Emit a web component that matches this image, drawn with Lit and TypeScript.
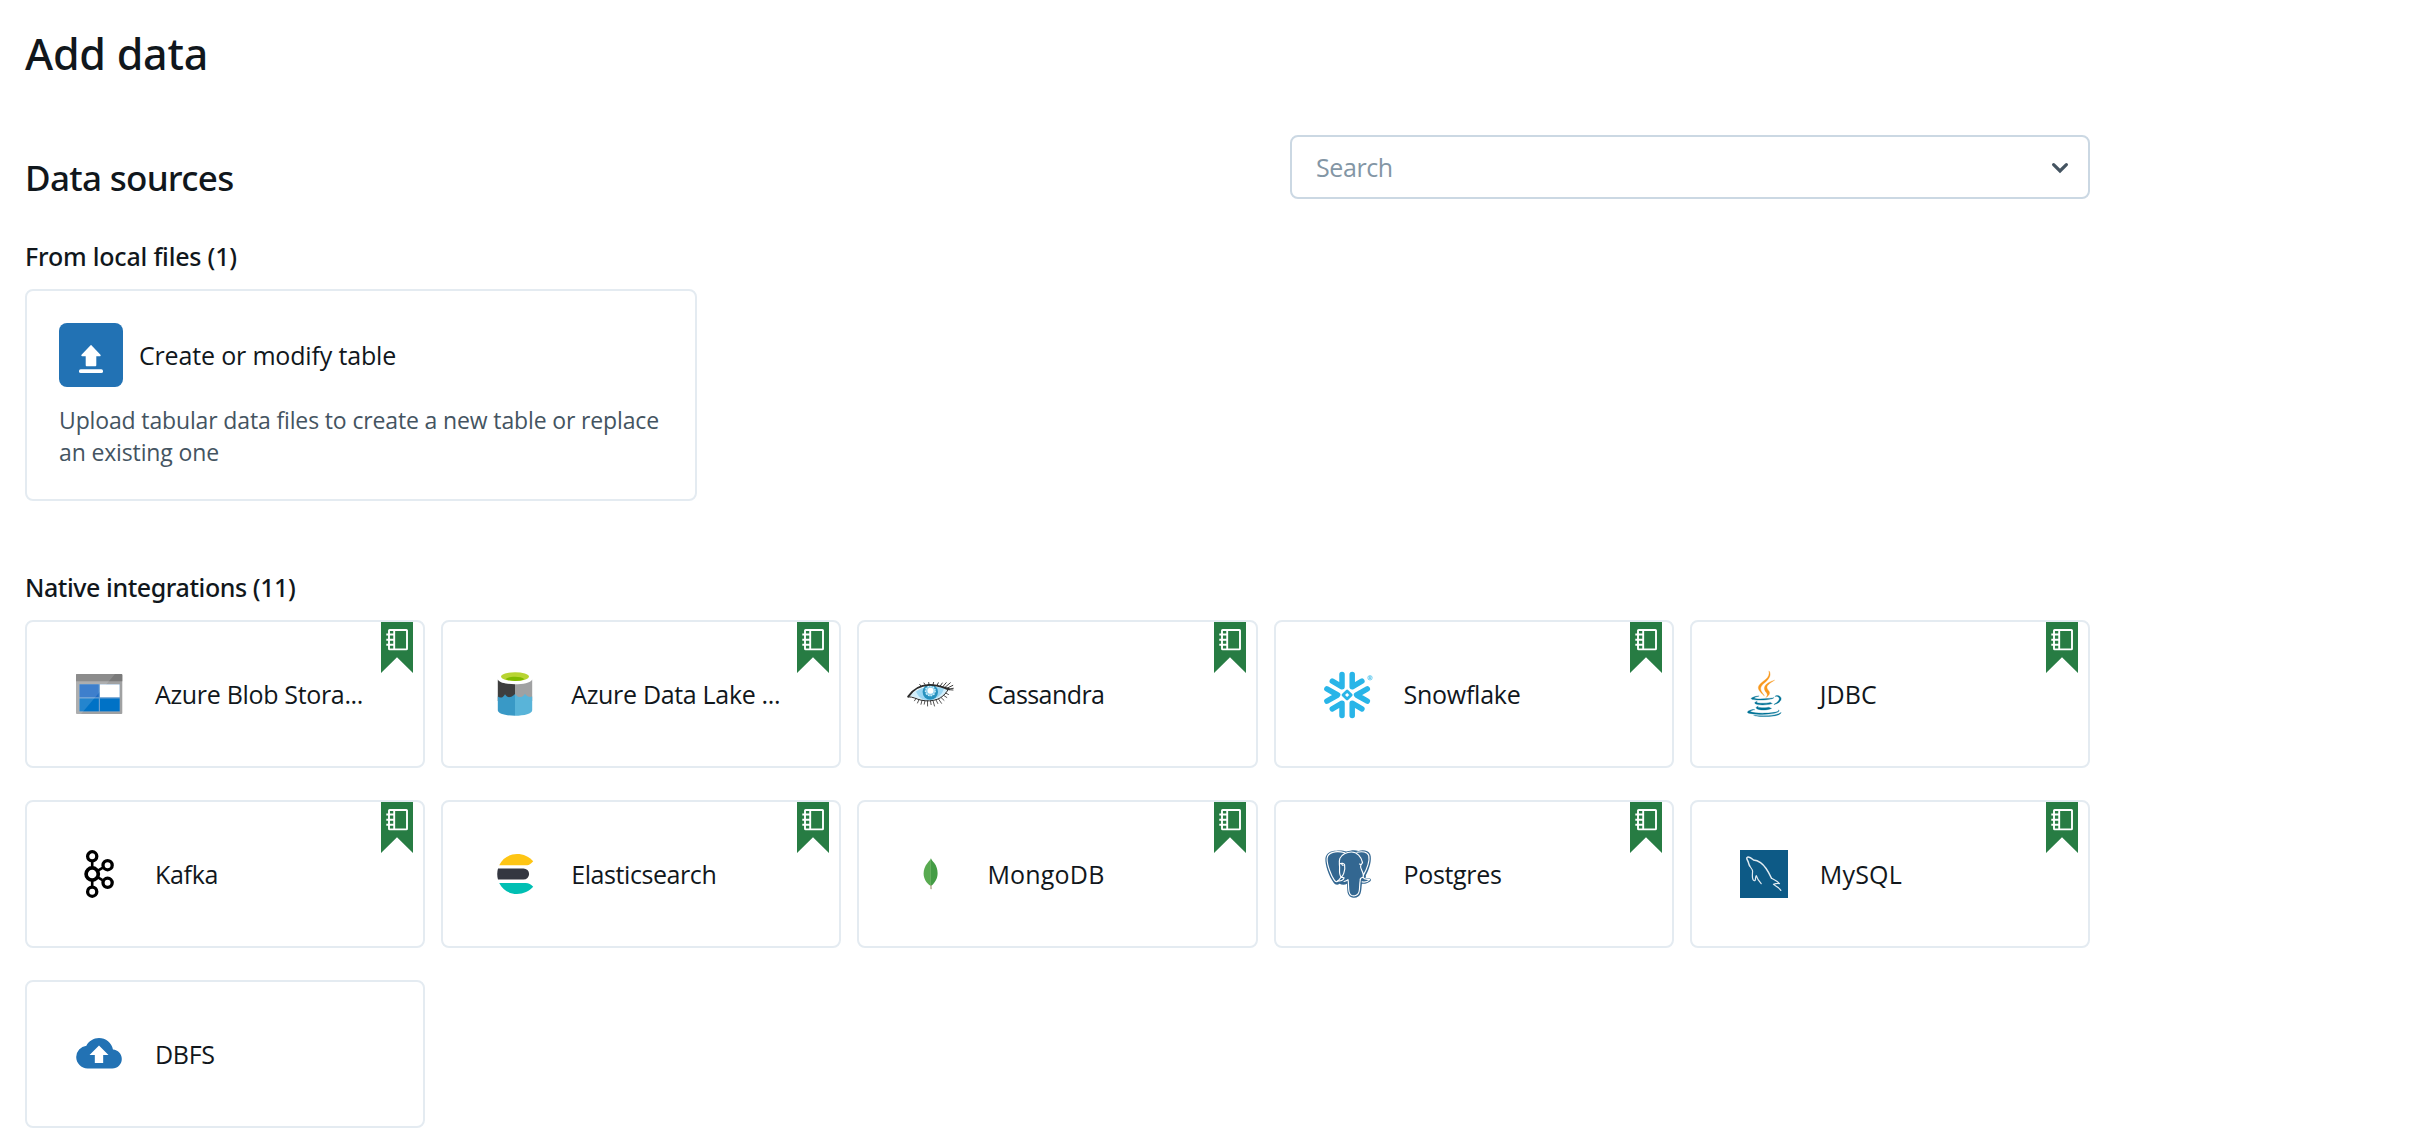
import { LitElement, html, css, svg } from "lit";
import type { TemplateResult, SVGTemplateResult } from "lit";
import { styleMap } from "lit/directives/style-map.js";

interface Source {
  name: string;
  icon: SVGTemplateResult;
  /** Letter spacing of the label, in pixels. */
  tracking: number;
  notebook: boolean;
}

const azureBlob = svg`
  <rect x="1" y="4" width="46.3" height="40" rx="1" fill="#a0a1a2"/>
  <path d="M2 4h44.3a1 1 0 0 1 1 1v6.2H1V5a1 1 0 0 1 1-1z" fill="#7a7a7a"/>
  <path d="M4.4 14.2h40.4v27.2H4.4z" fill="#6a9fd0"/>
  <path d="M4.6 14.4h19.2v12.8H4.6z" fill="#1f6bc4"/>
  <path d="M25 14.4h19.6v12.8H25z" fill="#fff"/>
  <path d="M4.6 28.4h19.2v12.8H4.6zM25 28.4h19.6v12.8H25z" fill="#0072c6"/>
  <path d="M1 5a1 1 0 0 1 1-1h38L6 44H2a1 1 0 0 1-1-1z" fill="#fff" opacity=".14"/>`;

const azureLake = svg`
  <path d="M6.8 9.5C8.5 13 16 14.2 24 14.2V31H6.8z" fill="#3e3e3e"/>
  <path d="M41.2 9.5C39.5 13 32 14.2 24 14.2V31h17.2z" fill="#a0a1a2"/>
  <path d="M6.8 26.5c2 1.5 4.5 1.5 6.2-.8l1-1.500c1.500 2.300 3 3.200 5 2.900 2-.3 3-1.500 5-3.200V45.700C14.500 45.700 6.800 43.500 6.800 40.200z" fill="#3999c6"/>
  <path d="M24 23.900c1.500 2 3 3.200 5 3.200s3.600-1.300 5-3.400c1.500 2.300 4 4 7.200 2.800v13.700c0 3.300-7.700 5.500-17.200 5.500z" fill="#59b4d9"/>
  <ellipse cx="24" cy="7.6" rx="17" ry="5.800" fill="#fff"/>
  <ellipse cx="24" cy="6.600" rx="14" ry="4.300" fill="#b8d432"/>
  <path d="M14.600 9.200C16.500 7.600 20 6.800 24 6.800s7.500.8 9.400 2.400C31.300 10.200 28 10.900 24 10.900s-7.300-.7-9.400-1.700z" fill="#7fba00"/>`;

const cassandra = svg`
  <path d="M3 26c5-5.500 10-8.800 19-9.200 8-.3 13 1 18.500 2.400C37.500 26 30 30.400 21 30.600 14 30.700 10 27.500 3 26z" fill="#d3effb"/>
  <path d="M9 21.500c3.500-2.500 7-4.200 13-4.600 7-.3 11 .6 15 1.700C35 26 28 30 21 30.200c-6-.3-10-3.500-12-8.700z" fill="#9bd6f2"/>
  <circle cx="23.300" cy="22" r="7.700" fill="#2792bf"/>
  <circle cx="23.300" cy="21" r="4.900" fill="#8fd0ec" stroke="#d9f2fc" stroke-width="1.200" stroke-dasharray="1.500 1.300"/>
  <circle cx="23.500" cy="20.800" r="3" fill="#fff"/>
  <g fill="none" stroke="#2b2b2b" stroke-linecap="round">
    <path d="M1.200 26.600C6 19.500 13 15.300 22 14.900c8-.2 13.500 2.300 20 4.300" stroke-width="1.900"/>
    <path d="M1.200 26.800c5-.2 8.500 2.500 13 3.400 6 1.200 11 .8 16-.8 5-1.900 8.500-5.500 11-9.800" stroke-width="1"/>
    <path d="M18 14.600l-1-1.600M22 14.500l-.3-2M26 14.700l.6-2.300M30 15.500l1.300-2.700M33 16.300l2.300-3.300M35.500 17l3.700-4.300M37.500 17.800l5.800-5M39 18.700l6.800-3.300M40 19.300l6.300-1M41 19.600l5 .4M14 16l-1.300-1.600" stroke-width=".9"/>
    <path d="M9 28.400l-1.500 2.400M12 29.600l-1.500 3.400M15 30.300l-1 4M18 30.800l-.8 3.400M20.500 31l.1 5M23.500 31l.6 3.600M26 30.600l1.500 5.400M29 29.900l1.800 3.600M31.500 29l3 4.300M34 27.500l3 2.800M36.500 25.300l3.300 2.200M38.500 23l3 1.500" stroke-width=".8"/>
  </g>`;

const snowflake = svg`
  <g fill="none" stroke="#29b5e8" stroke-width="5.500" stroke-linecap="round" stroke-linejoin="round">
    <path d="M18 4.600v12.200L8.300 11.200M28.200 4.600v12.200l9.700-5.600"/>
    <path d="M18 45.400V33.200l-9.700 5.600M28.200 45.400V33.200l9.700 5.600"/>
    <path d="M2.900 18.900L13.600 25 2.900 31.100M43.300 18.900L32.600 25l10.700 6.100"/>
    <path d="M23.100 20.900l4.100 4.100-4.100 4.100-4.100-4.100z" stroke-width="2.800"/>
  </g>
  <g fill="none" stroke="#29b5e8" stroke-width=".6"><circle cx="46" cy="7.800" r="2.200"/><path d="M45.300 9.100V6.600h.9a.7.7 0 0 1 0 1.400h-.9M46.100 8l.8 1.100"/></g>`;

const java = svg`
  <g transform="translate(.9 .3) scale(.366)">
    <g fill="#007396" stroke="#007396" stroke-width=".9">
      <path d="M47.617 98.120s-4.767 2.774 3.397 3.710c9.892 1.130 14.947.968 25.845-1.092 0 0 2.871 1.795 6.873 3.351-24.439 10.470-55.308-.607-36.115-5.969zm-2.988-13.665s-5.348 3.959 2.823 4.805c10.567 1.091 18.910 1.180 33.354-1.600 0 0 1.993 2.025 5.132 3.131-29.542 8.640-62.446.680-41.309-6.336z"/>
      <path d="M102.123 108.229s3.529 2.910-3.888 5.159c-14.102 4.272-58.706 5.560-71.094.171-4.451-1.938 3.899-4.625 6.526-5.192 2.739-.593 4.303-.485 4.303-.485-4.953-3.487-32.013 6.850-13.743 9.815 49.821 8.076 90.817-3.637 77.896-9.468zM49.912 70.294s-22.686 5.389-8.033 7.348c6.188.828 18.518.638 30.011-.326 9.390-.789 18.813-2.474 18.813-2.474s-3.308 1.419-5.704 3.053c-23.042 6.061-67.544 3.238-54.731-2.958 10.832-5.239 19.644-4.643 19.644-4.643zm40.697 22.747c23.421-12.167 12.591-23.860 5.032-22.285-1.848.385-2.677.720-2.677.720s.688-1.079 2-1.543c14.953-5.255 26.451 15.503-4.823 23.725 0-.002.359-.327.468-.617z"/>
      <path d="M52.214 126.021c22.476 1.437 57-.8 57.817-11.436 0 0-1.571 4.032-18.577 7.231-19.186 3.612-42.854 3.191-56.887.874 0 .001 2.875 2.381 17.647 3.331z"/>
    </g>
    <g fill="#f8981d" stroke="#f8981d" stroke-width=".9">
      <path d="M69.802 61.271c6.025 6.935-1.580 13.170-1.580 13.170s15.289-7.891 8.269-17.777c-6.559-9.215-11.587-13.792 15.635-29.580 0 .001-42.731 10.670-22.324 34.187z"/>
      <path d="M76.491 1.587S89.459 14.563 64.188 34.510c-20.266 16.006-4.621 25.130-.007 35.559-11.831-10.673-20.509-20.070-14.688-28.815C58.041 28.420 81.722 22.195 76.491 1.587z"/>
    </g>
  </g>`;

const kafka = svg`
  <g fill="none" stroke="#000">
    <path d="M17.200 11v6M17.200 31v6M22.500 20.800l5-3M22.500 27.200l5 3" stroke-width="2.600"/>
    <circle cx="17.200" cy="6.300" r="4.600" stroke-width="3.300"/>
    <circle cx="17.200" cy="24" r="6.100" stroke-width="3.700"/>
    <circle cx="17.200" cy="41.700" r="4.600" stroke-width="3.300"/>
    <circle cx="32.600" cy="15.200" r="4.600" stroke-width="3.300"/>
    <circle cx="32.600" cy="32.800" r="4.600" stroke-width="3.300"/>
  </g>`;

const elastic = svg`
  <path d="M8.200 15.200C11.500 8.300 18.200 4 26 4c6.400 0 12.300 2.700 16.200 7.300-1.800 2.400-4 3.900-6.200 3.900z" fill="#fec514"/>
  <path d="M7 18.400h25.500a5.600 5.600 0 0 1 0 11.200H7a21 21 0 0 1 0-11.200z" fill="#343741"/>
  <path d="M8.200 32.900h26.500c3 0 5.600 1.500 7.500 3.900C38.300 41.300 32.400 44 26 44c-7.800 0-14.500-4.300-17.800-11.100z" fill="#00bfb3"/>`;

const mongo = svg`
  <path d="M23.900 8.300c-.7 1.700-1.700 2.700-3.400 4.700-2.500 3-3.900 6.700-3.900 10.600 0 5.400 3 9.700 6.800 12.200l.5-.1z" fill="#58aa50"/>
  <path d="M23.900 8.300c.8 1.900 2 3 3.200 4.500 2.400 3 3.500 6.600 3.500 10.400 0 5.200-2.500 9.500-6.300 12.600l-.4-.1z" fill="#449c45"/>
  <path d="M23.600 35.300l.7 0 .1 3.800-.7-.2z" fill="#a59b78" stroke="#a59b78" stroke-width=".4"/>`;

const postgres = svg`
  <path d="M12.500.7C17 .2 20 1 22.500 1.600 27 .1 30.800-.4 34.500 1c5-1.500 10-.4 11.800 3.500 1.800 5-.8 14.500-4.600 21 .5 1 0 2-.3 2.700l4.500.2c1.500.5 1.300 2.300-.2 3.400-2.300 1.600-5 2.300-7.800 1.900-.4 3.300-.4 6.700-1.300 9.600-1.200 3.700-4.500 5.200-8.600 4.200-3.300-1-4.600-3.500-4.700-7.200l-.3-6.600c-2 1.300-5.200 1.200-7.500.1-2.200 1.700-4.300 1-6-1.300C4.800 26 1 15 1.400 8.500 1.900 3.200 6.500.6 12.500.7z" fill="#336791"/>
  <g fill="none" stroke="#fff" stroke-width="1.150" stroke-linecap="round" stroke-linejoin="round">
    <path d="M20.800 2.700C12 .4 3.400 2 3.100 8.700c-.2 6 4 17 7.200 21.500 1.300 1.800 2.700 2 4 .5l3-3.700"/>
    <path d="M17.300 27.300c-2.500-2.700-1.700-6.500-1.700-9.700 0-3.200-1-5.600.3-9.200C17.500 4.500 22.500 2 27.500 2c5.800 0 9.700 5 11 10.500"/>
    <path d="M33 2.300c5-1.300 10.500-.5 11.700 3.200 1.300 5-1.600 13.500-5.300 19.600-.4-3.100-2.500-6-2.800-8.100-.3-2.300 1.500-3 1.900-4.500"/>
    <path d="M15.800 13.800c1.600-.9 4.300-.5 4.800 1 .6 3-.1 6.300-.8 8.300-.6 1.700-1 3-2.500 4.200l2.800.6c-.5 2.500-3.800 3.500-6.300 2.700"/>
    <path d="M20 31.500c2-.3 3.200-1 4-1.800.8 3.500.2 8.200 1 11.800.7 3.300 3 4.700 5.900 4.300 3-.6 4.200-2.500 4.500-6 .3-3.200.2-6 .8-9.500M36.200 30.300c-.4-2.300.9-2.600 2.900-3 .7.900 1.500 1.700 3 1.800l3.500.5c-1.500 1.900-4.800 2.700-7.500 2.300"/>
    <path d="M39.400 25.100l-.3 2.200"/>
    <path d="M17.800 14.600l1.300.8M35.500 14l1.300.6"/>
  </g>`;

const mysql = svg`
  <rect width="48" height="48" fill="#0d5a86"/>
  <g fill="none" stroke="#e2ecf2" stroke-linecap="round" stroke-linejoin="round">
    <path d="M31.500 28.300C28.500 22 26 16.500 20.500 12.700c-2.700-1.900-4.700-2.500-7-2.700-1.700-1.500-3.600-3.300-5.800-2.900-1.800.5-.6 2.500.2 4 .8 1.600.8 3.300 1.700 4.700" stroke-width="1.500"/>
    <path d="M9.600 15.800c1 1.900 3 3.500 3 5.400-.1 2.700-.9 7 .8 9 1 1 1.800.6 2-.8.200-1.400.1-2.600.9-3.700.6 2.300 1.700 4.400 4.900 8" stroke-width="1.200"/>
    <path d="M31.500 28.300c2.300 1.500 5.500 2.300 8 5.300-1.900-.4-4.300.1-6 .8 2.200 2 5.500 2.600 7.300 6" stroke-width="1.200"/>
  </g>`;

const dbfs = svg`
  <g transform="translate(1.200 .4) scale(1.900)">
    <path d="M19.350 10.040A7.490 7.490 0 0 0 12 4C9.110 4 6.600 5.640 5.350 8.040A5.994 5.994 0 0 0 0 14c0 3.310 2.690 6 6 6h13c2.760 0 5-2.240 5-5 0-2.640-2.050-4.780-4.650-4.960z" fill="#2272b4"/>
    <path d="M14.200 13v4.100H9.800V13H7l5-5 5 5z" fill="#fff"/>
  </g>`;

const SOURCES: Source[] = [
  { name: "Azure Blob Stora...", icon: azureBlob, tracking: -0.33, notebook: true },
  { name: "Azure Data Lake ...", icon: azureLake, tracking: -0.32, notebook: true },
  { name: "Cassandra", icon: cassandra, tracking: -0.56, notebook: true },
  { name: "Snowflake", icon: snowflake, tracking: -0.27, notebook: true },
  { name: "JDBC", icon: java, tracking: 0.1, notebook: true },
  { name: "Kafka", icon: kafka, tracking: -0.3, notebook: true },
  { name: "Elasticsearch", icon: elastic, tracking: -0.42, notebook: true },
  { name: "MongoDB", icon: mongo, tracking: 0.2, notebook: true },
  { name: "Postgres", icon: postgres, tracking: -0.35, notebook: true },
  { name: "MySQL", icon: mysql, tracking: 0.2, notebook: true },
  { name: "DBFS", icon: dbfs, tracking: -0.3, notebook: false },
];

class SourceCard extends LitElement {
  static properties = { source: { attribute: false } };
  declare source: Source;

  static styles = css`
    :host { display: block; }
    .card {
      position: relative;
      box-sizing: border-box;
      height: 148px;
      padding: 0 16px 0 48px;
      display: flex;
      align-items: center;
      gap: 32px;
      border: 2px solid #e4ebf1;
      border-radius: 8px;
    }
    .icon { width: 48px; height: 48px; flex: none; overflow: visible; }
    .name { font-size: 25px; line-height: 40px; white-space: nowrap; color: #11171c; }
    .ribbon { position: absolute; top: 0; right: 10px; width: 32px; height: 51px; }
  `;

  render(): TemplateResult {
    const { name, icon, tracking, notebook } = this.source;
    return html`
      <div class="card">
        <svg class="icon" viewBox="0 0 48 48">${icon}</svg>
        <span class="name" style=${styleMap({ letterSpacing: `${tracking}px` })}>${name}</span>
        ${notebook
          ? html`<svg class="ribbon" viewBox="0 0 32 51">
              <path d="M0 0h32v51L16 35.300 0 51z" fill="#277c43"/>
              <g fill="none" stroke="#fff" stroke-width="1.900">
                <rect x="8" y="8" width="18" height="19.400" rx=".6"/>
                <path d="M13.200 8v19.400M5.300 12.500h7.500M5.300 17.700h7.500M5.300 22.800h7.500"/>
              </g>
            </svg>`
          : null}
      </div>`;
  }
}
customElements.define("source-card", SourceCard);

class AppRoot extends LitElement {
  static styles = css`
    :host {
      display: block;
      min-height: 1144px;
      box-sizing: border-box;
      background: #fff;
      color: #11171c;
      font-family: "Open Sans", "Noto Sans", sans-serif;
    }
    .page { width: 2065px; padding: 30px 0 16px 25px; }
    h1, h2, h3, p { margin: 0; }
    h1, h2, h3 { font-family: "Noto Sans", "Open Sans", sans-serif; font-weight: 500; }
    h1 { font-size: 43px; line-height: 48px; letter-spacing: -0.25px; }
    h2 { font-size: 35px; line-height: 40px; letter-spacing: -0.7px; margin-top: 23px; }
    h3 { font-size: 25px; line-height: 32px; margin-bottom: 17px; }
    .local { margin-top: 41px; letter-spacing: -0.2px; }
    .native { margin-top: 70px; letter-spacing: -0.42px; }
    .header { display: flex; justify-content: space-between; align-items: flex-start; margin-top: 57px; height: 64px; }
    .search {
      box-sizing: border-box;
      width: 800px;
      height: 64px;
      padding: 0 18px 0 24px;
      display: flex;
      align-items: center;
      justify-content: space-between;
      border: 2px solid #cbd8e3;
      border-radius: 8px;
      font-size: 25px;
      letter-spacing: -0.4px;
      color: #8396a5;
    }
    .chevron { width: 20px; height: 12px; margin-top: 2px; }
    .upload {
      box-sizing: border-box;
      width: 672px;
      height: 212px;
      padding: 32px;
      border: 2px solid #e4ebf1;
      border-radius: 8px;
    }
    .upload-head { display: flex; align-items: center; gap: 16px; font-size: 25px; letter-spacing: -0.17px; }
    .upload-icon { width: 64px; height: 64px; }
    .desc { margin-top: 17px; font-size: 23px; line-height: 32px; letter-spacing: -0.14px; color: #445461; }
    .desc span { display: block; white-space: nowrap; }
    .grid { display: grid; grid-template-columns: repeat(5, 1fr); gap: 32px 16px; }
  `;

  render(): TemplateResult {
    return html`
      <main class="page">
        <h1>Add data</h1>
        <div class="header">
          <h2>Data sources</h2>
          <div class="search">
            <span>Search</span>
            <svg class="chevron" viewBox="0 0 20 12">
              <path d="M3.600 2.600l6.400 6.400 6.400-6.400" fill="none" stroke="#445461" stroke-width="3.200" stroke-linecap="round"/>
            </svg>
          </div>
        </div>

        <h3 class="local">From local files (1)</h3>
        <section class="upload">
          <div class="upload-head">
            <svg class="upload-icon" viewBox="0 0 64 64">
              <rect width="64" height="64" rx="8" fill="#2272b4"/>
              <path d="M32 23l8.800 9.300h-4.400v10H27.600v-10h-4.400z" fill="#fff" stroke="#fff" stroke-width="1.800" stroke-linejoin="round"/>
              <rect x="20" y="46.300" width="24" height="3.800" rx="1.700" fill="#fff"/>
            </svg>
            <span>Create or modify table</span>
          </div>
          <p class="desc">
            <span>Upload tabular data files to create a new table or replace</span>
            <span>an existing one</span>
          </p>
        </section>

        <h3 class="native">Native integrations (${SOURCES.length})</h3>
        <section class="grid">
          ${SOURCES.map((s) => html`<source-card .source=${s}></source-card>`)}
        </section>
      </main>`;
  }
}
customElements.define("app-root", AppRoot);
